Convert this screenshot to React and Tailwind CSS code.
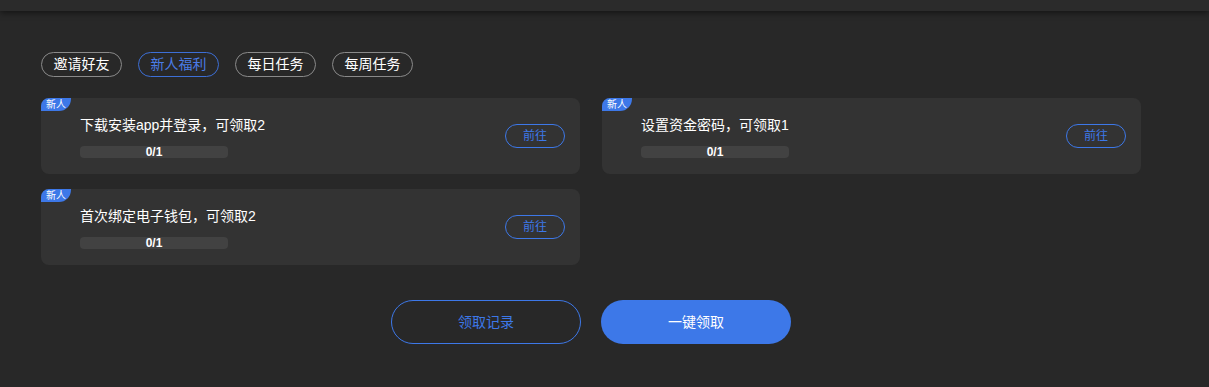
import React from "react";

const tabs = ["邀请好友", "新人福利", "每日任务", "每周任务"];
const tasks = [
  "下载安装app并登录，可领取2",
  "设置资金密码，可领取1",
  "首次绑定电子钱包，可领取2",
];

function Card({ title }) {
  return (
    <div className="relative h-[76px] rounded-lg bg-[#333333] flex items-center justify-between pl-[39px] pr-[15px]">
      <div className="absolute left-0 top-0 h-[13px] w-[30px] bg-[#3d78e8] rounded-tl-lg rounded-br-[12px] text-[10px] leading-[13px] text-white pl-[5px]">
        新人
      </div>
      <div className="flex flex-col pt-[2px]">
        <div className="text-[14px] leading-[18px] text-white">{title}</div>
        <div className="mt-[12px] w-[148px] h-[12px] rounded bg-[#424242] text-center text-[12px] leading-[12px] font-bold text-white">
          0/1
        </div>
      </div>
      <button className="w-[60px] h-[24px] rounded-full border border-[#3d78e8] text-[12px] text-[#3d78e8]">
        前往
      </button>
    </div>
  );
}

export default function App() {
  return (
    <div
      className="w-[1209px] h-[387px] bg-[#282828] overflow-hidden"
      style={{ fontFamily: '"Liberation Sans", "Noto Sans CJK SC", sans-serif' }}
    >
      <div className="h-[11px] bg-[#2b2b2b] shadow-[0_2px_6px_rgba(0,0,0,0.5)]" />
      <div className="pl-[41px] w-[1141px]">
        <div className="mt-[41px] flex gap-4">
          {tabs.map((t, i) => (
            <div
              key={t}
              className={
                i === 1
                  ? "h-[25px] w-[81px] rounded-full border border-[#3d6fd6] text-[#4a7ce6] text-[14px] flex items-center justify-center"
                  : "h-[25px] w-[81px] rounded-full border border-[#8a8a8a] text-white text-[14px] flex items-center justify-center"
              }
            >
              {t}
            </div>
          ))}
        </div>
        <div className="mt-[21px] grid grid-cols-2 gap-x-[22px] gap-y-[15px]">
          {tasks.map((t) => (
            <Card key={t} title={t} />
          ))}
        </div>
        <div className="mt-[35px] flex justify-center gap-[20px]">
          <button className="w-[190px] h-[44px] rounded-full border border-[#3d78e8] text-[14px] text-[#3d78e8]">
            领取记录
          </button>
          <button className="w-[190px] h-[44px] rounded-full bg-[#3d78e8] text-[14px] text-white">
            一键领取
          </button>
        </div>
      </div>
    </div>
  );
}
